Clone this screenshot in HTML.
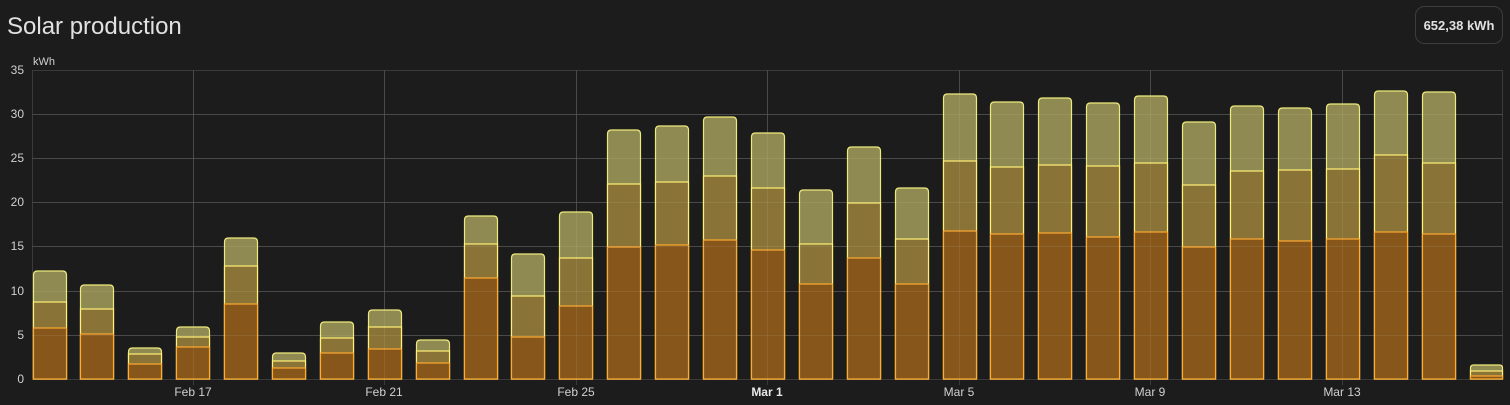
<!DOCTYPE html>
<html><head><meta charset="utf-8"><style>
html,body{margin:0;padding:0;background:#1c1c1c;width:1510px;height:405px;overflow:hidden;font-family:"Liberation Sans",sans-serif}
.t{fill:#8e8a52;stroke:#eeea7c;stroke-width:1.2}
.m{fill:#8a7336;stroke:#fff176;stroke-width:1.2}
.b{fill:#86561b;stroke:#ffab30;stroke-width:1.2}
</style></head><body>
<svg width="1510" height="405" xmlns="http://www.w3.org/2000/svg" style="position:absolute;left:0;top:0">
<text x="7" y="34" font-size="24" fill="#e1e1e1" font-family="Liberation Sans, sans-serif">Solar production</text>
<rect x="1415.5" y="6.5" width="87" height="37" rx="9" fill="none" stroke="#3d3d3d"/>
<text x="1459" y="30" font-size="13" font-weight="bold" fill="#e1e1e1" text-anchor="middle" font-family="Liberation Sans, sans-serif">652,38 kWh</text>
<g font-family="Liberation Sans, sans-serif" font-size="12" fill="#d0d0d0" text-anchor="end">
<text x="24" y="74">35</text><text x="24" y="118">30</text><text x="24" y="162">25</text><text x="24" y="206">20</text><text x="24" y="250">15</text><text x="24" y="295">10</text><text x="24" y="339">5</text><text x="24" y="383">0</text>
</g>
<text x="33" y="65" font-size="11" fill="#d0d0d0" font-family="Liberation Sans, sans-serif">kWh</text>
<g stroke="#3a3a3a" stroke-width="1">
<path d="M32 70.5H1503M32 114.5H1503M32 158.5H1503M32 202.5H1503M32 246.5H1503M32 291.5H1503M32 335.5H1503M32 379.5H1503"/>
<path d="M32.5 70V379M193.5 70V385M384.5 70V385M576.5 70V385M767.5 70V385M959.5 70V385M1150.5 70V385M1342.5 70V385M1502.5 70V379"/>
</g>
<g id="bars">
<path class="t" d="M33.5 379V275Q33.5 271 37.5 271H62.5Q66.5 271 66.5 275V379Z"/><rect class="m" x="33.5" y="302" width="33" height="77"/><rect class="b" x="33.5" y="328" width="33" height="51"/>
<path class="t" d="M80.5 379V289Q80.5 285 84.5 285H109.5Q113.5 285 113.5 289V379Z"/><rect class="m" x="80.5" y="309" width="33" height="70"/><rect class="b" x="80.5" y="334" width="33" height="45"/>
<path class="t" d="M128.5 379V352Q128.5 348 132.5 348H157.5Q161.5 348 161.5 352V379Z"/><rect class="m" x="128.5" y="354" width="33" height="25"/><rect class="b" x="128.5" y="364" width="33" height="15"/>
<path class="t" d="M176.5 379V331Q176.5 327 180.5 327H205.5Q209.5 327 209.5 331V379Z"/><rect class="m" x="176.5" y="337" width="33" height="42"/><rect class="b" x="176.5" y="347" width="33" height="32"/>
<path class="t" d="M224.5 379V242Q224.5 238 228.5 238H253.5Q257.5 238 257.5 242V379Z"/><rect class="m" x="224.5" y="266" width="33" height="113"/><rect class="b" x="224.5" y="304" width="33" height="75"/>
<path class="t" d="M272.5 379V357Q272.5 353 276.5 353H301.5Q305.5 353 305.5 357V379Z"/><rect class="m" x="272.5" y="361" width="33" height="18"/><rect class="b" x="272.5" y="368" width="33" height="11"/>
<path class="t" d="M320.5 379V326Q320.5 322 324.5 322H349.5Q353.5 322 353.5 326V379Z"/><rect class="m" x="320.5" y="338" width="33" height="41"/><rect class="b" x="320.5" y="353" width="33" height="26"/>
<path class="t" d="M368.5 379V314Q368.5 310 372.5 310H397.5Q401.5 310 401.5 314V379Z"/><rect class="m" x="368.5" y="327" width="33" height="52"/><rect class="b" x="368.5" y="349" width="33" height="30"/>
<path class="t" d="M416.5 379V344Q416.5 340 420.5 340H445.5Q449.5 340 449.5 344V379Z"/><rect class="m" x="416.5" y="351" width="33" height="28"/><rect class="b" x="416.5" y="363" width="33" height="16"/>
<path class="t" d="M464.5 379V220Q464.5 216 468.5 216H493.5Q497.5 216 497.5 220V379Z"/><rect class="m" x="464.5" y="244" width="33" height="135"/><rect class="b" x="464.5" y="278" width="33" height="101"/>
<path class="t" d="M511.5 379V258Q511.5 254 515.5 254H540.5Q544.5 254 544.5 258V379Z"/><rect class="m" x="511.5" y="296" width="33" height="83"/><rect class="b" x="511.5" y="337" width="33" height="42"/>
<path class="t" d="M559.5 379V216Q559.5 212 563.5 212H588.5Q592.5 212 592.5 216V379Z"/><rect class="m" x="559.5" y="258" width="33" height="121"/><rect class="b" x="559.5" y="306" width="33" height="73"/>
<path class="t" d="M607.5 379V134Q607.5 130 611.5 130H636.5Q640.5 130 640.5 134V379Z"/><rect class="m" x="607.5" y="184" width="33" height="195"/><rect class="b" x="607.5" y="247" width="33" height="132"/>
<path class="t" d="M655.5 379V130Q655.5 126 659.5 126H684.5Q688.5 126 688.5 130V379Z"/><rect class="m" x="655.5" y="182" width="33" height="197"/><rect class="b" x="655.5" y="245" width="33" height="134"/>
<path class="t" d="M703.5 379V121Q703.5 117 707.5 117H732.5Q736.5 117 736.5 121V379Z"/><rect class="m" x="703.5" y="176" width="33" height="203"/><rect class="b" x="703.5" y="240" width="33" height="139"/>
<path class="t" d="M751.5 379V137Q751.5 133 755.5 133H780.5Q784.5 133 784.5 137V379Z"/><rect class="m" x="751.5" y="188" width="33" height="191"/><rect class="b" x="751.5" y="250" width="33" height="129"/>
<path class="t" d="M799.5 379V194Q799.5 190 803.5 190H828.5Q832.5 190 832.5 194V379Z"/><rect class="m" x="799.5" y="244" width="33" height="135"/><rect class="b" x="799.5" y="284" width="33" height="95"/>
<path class="t" d="M847.5 379V151Q847.5 147 851.5 147H876.5Q880.5 147 880.5 151V379Z"/><rect class="m" x="847.5" y="203" width="33" height="176"/><rect class="b" x="847.5" y="258" width="33" height="121"/>
<path class="t" d="M895.5 379V192Q895.5 188 899.5 188H924.5Q928.5 188 928.5 192V379Z"/><rect class="m" x="895.5" y="239" width="33" height="140"/><rect class="b" x="895.5" y="284" width="33" height="95"/>
<path class="t" d="M943.5 379V98Q943.5 94 947.5 94H972.5Q976.5 94 976.5 98V379Z"/><rect class="m" x="943.5" y="161" width="33" height="218"/><rect class="b" x="943.5" y="231" width="33" height="148"/>
<path class="t" d="M990.5 379V106Q990.5 102 994.5 102H1019.5Q1023.5 102 1023.5 106V379Z"/><rect class="m" x="990.5" y="167" width="33" height="212"/><rect class="b" x="990.5" y="234" width="33" height="145"/>
<path class="t" d="M1038.5 379V102Q1038.5 98 1042.5 98H1067.5Q1071.5 98 1071.5 102V379Z"/><rect class="m" x="1038.5" y="165" width="33" height="214"/><rect class="b" x="1038.5" y="233" width="33" height="146"/>
<path class="t" d="M1086.5 379V107Q1086.5 103 1090.5 103H1115.5Q1119.5 103 1119.5 107V379Z"/><rect class="m" x="1086.5" y="166" width="33" height="213"/><rect class="b" x="1086.5" y="237" width="33" height="142"/>
<path class="t" d="M1134.5 379V100Q1134.5 96 1138.5 96H1163.5Q1167.5 96 1167.5 100V379Z"/><rect class="m" x="1134.5" y="163" width="33" height="216"/><rect class="b" x="1134.5" y="232" width="33" height="147"/>
<path class="t" d="M1182.5 379V126Q1182.5 122 1186.5 122H1211.5Q1215.5 122 1215.5 126V379Z"/><rect class="m" x="1182.5" y="185" width="33" height="194"/><rect class="b" x="1182.5" y="247" width="33" height="132"/>
<path class="t" d="M1230.5 379V110Q1230.5 106 1234.5 106H1259.5Q1263.5 106 1263.5 110V379Z"/><rect class="m" x="1230.5" y="171" width="33" height="208"/><rect class="b" x="1230.5" y="239" width="33" height="140"/>
<path class="t" d="M1278.5 379V112Q1278.5 108 1282.5 108H1307.5Q1311.5 108 1311.5 112V379Z"/><rect class="m" x="1278.5" y="170" width="33" height="209"/><rect class="b" x="1278.5" y="241" width="33" height="138"/>
<path class="t" d="M1326.5 379V108Q1326.5 104 1330.5 104H1355.5Q1359.5 104 1359.5 108V379Z"/><rect class="m" x="1326.5" y="169" width="33" height="210"/><rect class="b" x="1326.5" y="239" width="33" height="140"/>
<path class="t" d="M1374.5 379V95Q1374.5 91 1378.5 91H1403.5Q1407.5 91 1407.5 95V379Z"/><rect class="m" x="1374.5" y="155" width="33" height="224"/><rect class="b" x="1374.5" y="232" width="33" height="147"/>
<path class="t" d="M1422.5 379V96Q1422.5 92 1426.5 92H1451.5Q1455.5 92 1455.5 96V379Z"/><rect class="m" x="1422.5" y="163" width="33" height="216"/><rect class="b" x="1422.5" y="234" width="33" height="145"/>
<path class="t" d="M1470.5 379V368Q1470.5 365 1473.5 365H1499.5Q1502.5 365 1502.5 368V379Z"/><rect class="m" x="1470.5" y="371" width="32" height="8"/><rect class="b" x="1470.5" y="376" width="32" height="3"/>
</g>
<g stroke="#ffffff" stroke-opacity="0.08" stroke-width="1">
<path d="M32 114.5H1503M32 158.5H1503M32 202.5H1503M32 246.5H1503M32 291.5H1503M32 335.5H1503"/>
<path d="M193.5 70V379M384.5 70V379M576.5 70V379M767.5 70V379M959.5 70V379M1150.5 70V379M1342.5 70V379"/>
</g>
<g font-family="Liberation Sans, sans-serif" font-size="12" fill="#d0d0d0" text-anchor="middle">
<text x="193" y="396">Feb 17</text><text x="384" y="396">Feb 21</text><text x="576" y="396">Feb 25</text><text x="767" y="396" font-weight="bold" fill="#e8e8e8">Mar 1</text><text x="959" y="396">Mar 5</text><text x="1150" y="396">Mar 9</text><text x="1342" y="396">Mar 13</text>
</g>
</svg>
</body></html>
